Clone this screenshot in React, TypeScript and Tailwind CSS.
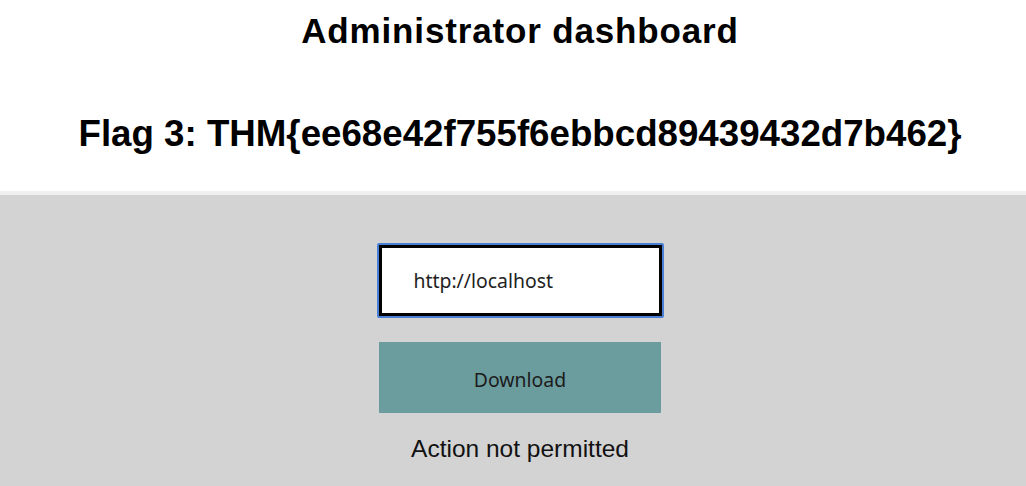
import React from "react";

export default function App() {
  return (
    <div className="min-h-[486px] w-full bg-[#d3d3d3] font-['Liberation_Sans',Arial,sans-serif] text-black">
      <div className="bg-white border-b-4 border-[#f0f0f0] pt-[11px] h-[195px] pl-[14px]">
        <h1 className="text-center text-[35px] leading-[40px] font-bold tracking-[0.85px]">Administrator dashboard</h1>
        <h1 className="text-center text-[36.7px] leading-[40px] font-bold mt-[63px]">Flag 3: THM{"{"}ee68e42f755f6ebbcd89439432d7b462{"}"}</h1>
      </div>
      <div className="flex flex-col items-center pt-[48px] pl-[14px]">
        <div className="w-[287px] h-[75px] border-2 border-[#4a7fd6] rounded-[2px]">
          <div className="w-full h-full border-[3px] border-black bg-white flex items-center pl-[32px]">
            <span className="font-['Noto_Sans',sans-serif] text-[19.4px] text-[#222]">http://localhost</span>
          </div>
        </div>
        <div className="mt-[24px] w-[282px] h-[71px] bg-[#6b9d9f] flex items-center justify-center pt-[4px]">
          <span className="font-['Noto_Sans',sans-serif] text-[19.4px] text-[#1c1c1c]">Download</span>
        </div>
        <p className="mt-[22px] text-[24.5px] leading-[28px] text-[#111]">Action not permitted</p>
      </div>
    </div>
  );
}
